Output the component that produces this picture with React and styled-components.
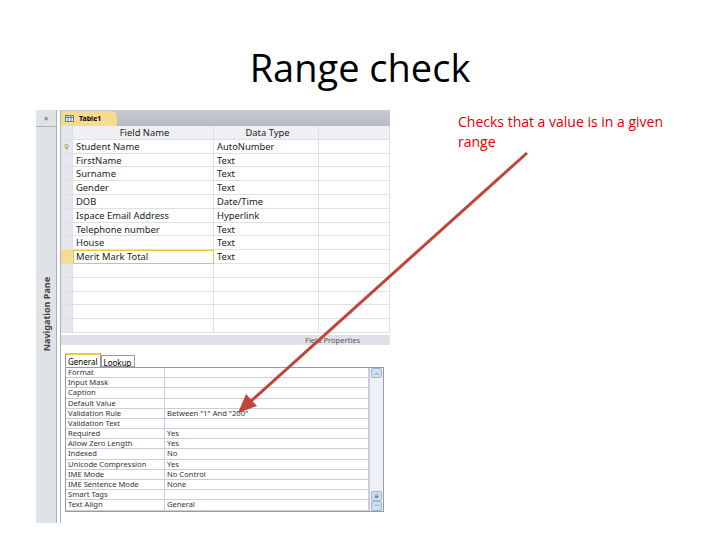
import React from "react";
import styled, { createGlobalStyle } from "styled-components";

const G = createGlobalStyle`
  html,body{margin:0;padding:0;background:#fff;}
  body{width:720px;height:540px;overflow:hidden;font-family:"Open Sans","Liberation Sans",sans-serif;}
`;
const Slide = styled.div`position:relative;width:720px;height:540px;`;
const Title = styled.h1`margin:0;padding-top:40px;height:70px;text-align:center;font-family:"Open Sans",sans-serif;font-weight:400;font-size:38px;color:#000;line-height:54px;`;
const Body = styled.div`display:flex;padding-left:36px;`;
const Shot = styled.div`width:354px;height:413px;display:flex;background:#fff;font-family:"Noto Sans","DejaVu Sans",sans-serif;`;
const Nav = styled.div`width:20px;background:#dfe3e8;border-right:1px solid #a9b1bb;display:flex;flex-direction:column;align-items:center;`;
const NavTop = styled.div`height:16px;width:100%;border-bottom:1px solid #a9b1bb;font-size:8px;color:#556;text-align:center;line-height:16px;`;
const NavLabel = styled.div`writing-mode:vertical-rl;transform:rotate(180deg);font-size:9px;font-weight:700;color:#444;margin-top:150px;`;
const Main = styled.div`flex:1;display:flex;flex-direction:column;margin-left:3px;border-left:1px solid #a9b1bb;`;
const TabBar = styled.div`height:16px;background:linear-gradient(#c7ccd3,#b6bcc5);display:flex;align-items:flex-end;`;
const Tab = styled.div`height:15px;width:52px;background:#f7dc8e;border-radius:3px 6px 0 0;font-size:7px;font-weight:700;display:flex;align-items:center;gap:5px;padding-left:4px;`;
const Grid = styled.div`display:grid;grid-template-columns:12px 141px 105px 1fr;`;
const Cell = styled.div`height:13.8px;box-sizing:border-box;border-right:1px solid #dde1e6;border-bottom:1px solid #dde1e6;font-size:9.4px;line-height:13px;padding-left:3px;color:#222;white-space:nowrap;overflow:hidden;
  background:${p=>p.$hd?"#eef0f3":p.$sel?"#f7dc8e":"#fff"};
  text-align:${p=>p.$hd?"center":"left"};
  ${p=>p.$cur?"outline:1px solid #e8c34a;outline-offset:-1px;":""}`;
const Sel = styled(Cell)`background:${p=>p.$on?"#f7dc8e":"#e4e8ec"};padding:0;font-size:7px;color:#a08a20;text-align:center;`;
const FP = styled.div`height:10px;margin-top:2px;background:#dfe3e8;font-size:7.5px;color:#555;text-align:right;padding-right:30px;line-height:10px;`;
const Props = styled.div`flex:1;background:#fff;padding:6px 6px 0 4px;display:flex;flex-direction:column;`;
const PTabs = styled.div`display:flex;align-items:flex-end;height:16px;`;
const PTab = styled.div`font-size:8px;padding:2px 2px;border:1px solid #99a;border-bottom:${p=>p.$on?"none":"1px solid #99a"};border-top:${p=>p.$on?"2px solid #f5c242":"1px solid #99a"};background:#fff;height:${p=>p.$on?"14px":"12px"};box-sizing:border-box;line-height:9px;`;
const PBox = styled.div`display:flex;border:1px solid #99a;`;
const PGrid = styled.div`flex:1;display:grid;grid-template-columns:99px 1fr;`;
const PC = styled.div`height:10.2px;box-sizing:border-box;border-right:1px solid #ccd;border-bottom:1px solid #ccd;font-size:7.6px;line-height:9.5px;padding-left:2px;color:#333;white-space:nowrap;`;
const Scroll = styled.div`width:13px;background:#eef1f5;border-left:1px solid #ccd;display:flex;flex-direction:column;justify-content:space-between;align-items:center;`;
const SBtn = styled.div`width:11px;height:10px;background:#cfe0f4;border:1px solid #9bb;border-radius:2px;box-sizing:border-box;font-size:6px;line-height:8px;text-align:center;color:#345;`;
const Note = styled.div`margin:2px 0 0 68px;color:#e00000;font-family:"Open Sans",sans-serif;font-size:14px;line-height:20px;width:240px;`;
const Arrow = styled.svg`position:absolute;left:0;top:0;pointer-events:none;`;

const fields=[["Student Name","AutoNumber"],["FirstName","Text"],["Surname","Text"],["Gender","Text"],["DOB","Date/Time"],["Ispace Email Address","Hyperlink"],["Telephone number","Text"],["House","Text"],["Merit Mark Total","Text"]];
const props=[["Format",""],["Input Mask",""],["Caption",""],["Default Value",""],["Validation Rule",'Between "1" And "200"'],["Validation Text",""],["Required","Yes"],["Allow Zero Length","Yes"],["Indexed","No"],["Unicode Compression","Yes"],["IME Mode","No Control"],["IME Sentence Mode","None"],["Smart Tags",""],["Text Align","General"]];

export default function App(){
  const rows=[...fields,...Array(5).fill(["",""])];
  return <Slide><G/>
    <Title>Range check</Title>
    <Body>
      <Shot>
        <Nav><NavTop>»</NavTop><NavLabel>Navigation Pane</NavLabel></Nav>
        <Main>
          <TabBar><Tab><svg width="9" height="7"><rect x=".5" y=".5" width="8" height="6" fill="#fff" stroke="#4a7ab5"/><path d="M.5 2.5h8M3 .5v6M6 .5v6" stroke="#4a7ab5"/></svg>Table1</Tab></TabBar>
          <Grid>
            <Sel/><Cell $hd $sel>Field Name</Cell><Cell $hd>Data Type</Cell><Cell $hd/>
            {rows.map((r,i)=><React.Fragment key={i}>
              <Sel $on={i===8}>{i===0?"♀":""}</Sel>
              <Cell $cur={i===8}>{r[0]}</Cell><Cell>{r[1]}</Cell><Cell/>
            </React.Fragment>)}
          </Grid>
          <FP>Field Properties</FP>
          <Props>
            <PTabs><PTab $on>General</PTab><PTab>Lookup</PTab></PTabs>
            <PBox>
              <PGrid>{props.map((p,i)=><React.Fragment key={i}><PC>{p[0]}</PC><PC>{p[1]}</PC></React.Fragment>)}</PGrid>
              <Scroll><SBtn>︿</SBtn><SBtn style={{marginTop:"auto"}}>≡</SBtn><SBtn>﹀</SBtn></Scroll>
            </PBox>
          </Props>
        </Main>
      </Shot>
      <Note>Checks that a value is in a given range</Note>
    </Body>
    <Arrow width="720" height="540">
      <line x1="527" y1="153" x2="250" y2="402" stroke="#c0443a" strokeWidth="3"/>
      <polygon points="238,413 246,394 257,406" fill="#c0443a"/>
    </Arrow>
  </Slide>;
}
